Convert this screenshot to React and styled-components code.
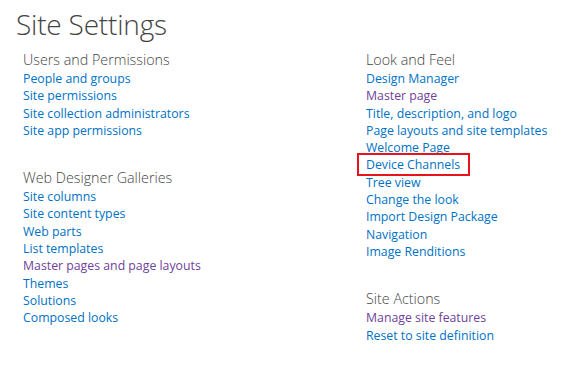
import styled, { createGlobalStyle } from 'styled-components';

const GlobalStyle = createGlobalStyle`
  html, body {
    margin: 0;
    padding: 0;
    background: #ffffff;
  }
  body {
    font-family: 'Open Sans', 'Noto Sans', sans-serif;
  }
`;

const sections = {
  left: [
    {
      title: 'Users and Permissions',
      links: [
        { label: 'People and groups' },
        { label: 'Site permissions' },
        { label: 'Site collection administrators' },
        { label: 'Site app permissions' },
      ],
    },
    {
      title: 'Web Designer Galleries',
      links: [
        { label: 'Site columns' },
        { label: 'Site content types' },
        { label: 'Web parts' },
        { label: 'List templates' },
        { label: 'Master pages and page layouts', visited: true },
        { label: 'Themes' },
        { label: 'Solutions' },
        { label: 'Composed looks' },
      ],
    },
  ],
  right: [
    {
      title: 'Look and Feel',
      links: [
        { label: 'Design Manager' },
        { label: 'Master page', visited: true },
        { label: 'Title, description, and logo' },
        { label: 'Page layouts and site templates' },
        { label: 'Welcome Page' },
        { label: 'Device Channels', marked: true },
        { label: 'Tree view' },
        { label: 'Change the look' },
        { label: 'Import Design Package' },
        { label: 'Navigation' },
        { label: 'Image Renditions' },
      ],
    },
    {
      title: 'Site Actions',
      links: [
        { label: 'Manage site features', visited: true },
        { label: 'Reset to site definition' },
      ],
    },
  ],
};

const App = () => {
  return (
    <Page>
      <GlobalStyle />
      <PageTitle>Site Settings</PageTitle>
      <Columns>
        {['left', 'right'].map((side) => (
          <Column key={side}>
            {sections[side].map((section) => (
              <Section key={section.title}>
                <SectionTitle>{section.title}</SectionTitle>
                <LinkList>
                  {section.links.map((link) => (
                    <li key={link.label}>
                      <SettingLink href='#' $visited={link.visited} $marked={link.marked}>
                        {link.label}
                      </SettingLink>
                    </li>
                  ))}
                </LinkList>
              </Section>
            ))}
          </Column>
        ))}
      </Columns>
    </Page>
  );
};

// styles
const Page = styled.div`
  width: 562px;
  height: 383px;
  padding: 4px 0 0 16px;
  box-sizing: border-box;
  overflow: hidden;
`;
const PageTitle = styled.h1`
  margin: 0;
  font-size: 28px;
  font-weight: 300;
  line-height: 40px;
  color: #444444;
  letter-spacing: -0.2px;
`;
const Columns = styled.div`
  display: grid;
  grid-template-columns: 343px 1fr;
  padding-left: 7px;
  margin-top: 7px;
`;
const Column = styled.div`
  display: flex;
  flex-direction: column;
  gap: 31px;
`;
const Section = styled.div``;
const SectionTitle = styled.h2`
  margin: 0 0 1px 0;
  font-size: 14.3px;
  font-weight: 300;
  line-height: 17px;
  color: #444444;
`;
const LinkList = styled.ul`
  list-style: none;
  margin: 0;
  padding: 0;
  li {
    display: block;
    height: 17.3px;
    line-height: 17px;
  }
`;
const SettingLink = styled.a`
  position: relative;
  font-size: 12.3px;
  color: ${(p) => (p.$visited ? '#6f3f9a' : '#0072c6')};
  text-decoration: none;
  white-space: nowrap;
  ${(p) =>
    p.$marked &&
    `
    &::after {
      content: '';
      position: absolute;
      left: -9px;
      right: -10px;
      top: -3px;
      bottom: -3px;
      border: 2px solid #e8141c;
    }
  `}
`;

export default App;
